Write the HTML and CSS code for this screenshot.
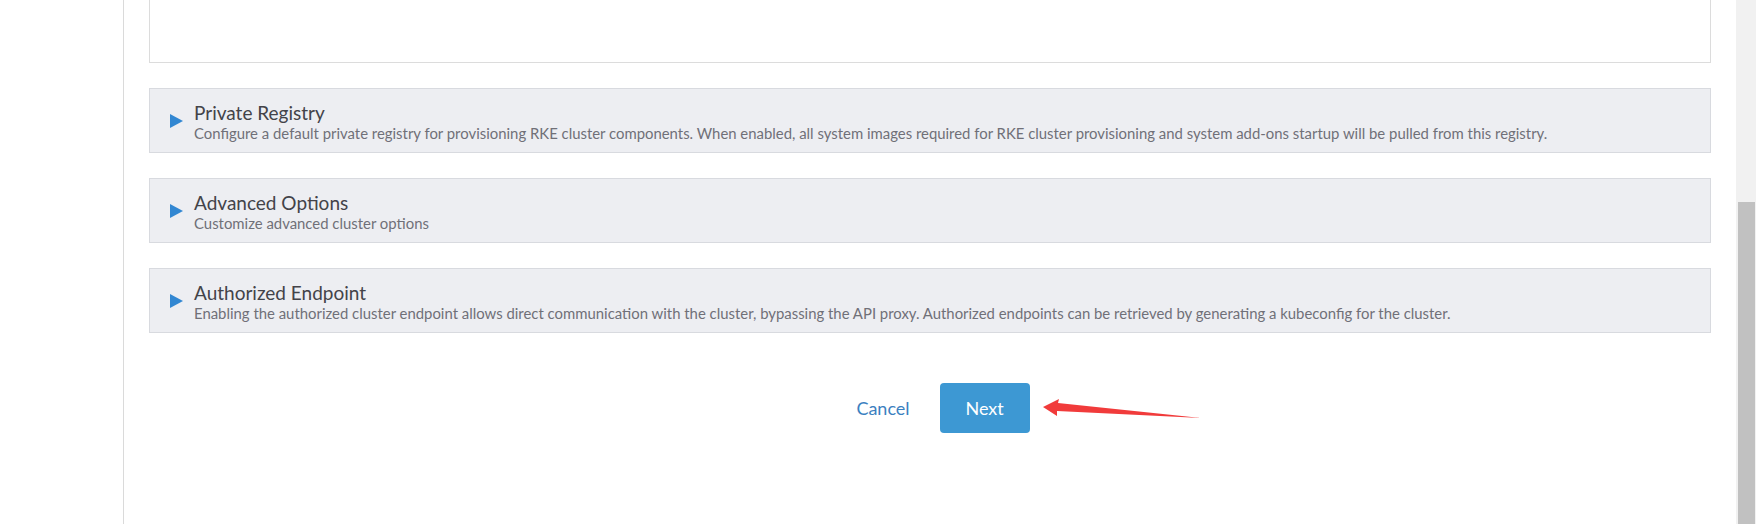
FILE: index.html
```html
<!DOCTYPE html>
<html lang="en">
<head>
<meta charset="UTF-8">
<meta name="viewport" content="width=device-width, initial-scale=1.0">
<title>Add Cluster</title>
<link rel="stylesheet" href="styles.css">
</head>
<body>

<div class="page">
  <aside class="sidebar"></aside>

  <main class="content">
    <!-- bottom of the config box, scrolled out of view -->
    <div class="config-box"></div>

    <div class="accordion-item">
      <span class="toggle"></span>
      <div class="accordion-text">
        <div class="accordion-title">Private Registry</div>
        <div class="accordion-desc">Configure a default private registry for provisioning RKE cluster components. When enabled, all system images required for RKE cluster provisioning and system add-ons startup will be pulled from this registry.</div>
      </div>
    </div>

    <div class="accordion-item">
      <span class="toggle"></span>
      <div class="accordion-text">
        <div class="accordion-title">Advanced Options</div>
        <div class="accordion-desc">Customize advanced cluster options</div>
      </div>
    </div>

    <div class="accordion-item">
      <span class="toggle"></span>
      <div class="accordion-text">
        <div class="accordion-title">Authorized Endpoint</div>
        <div class="accordion-desc">Enabling the authorized cluster endpoint allows direct communication with the cluster, bypassing the API proxy. Authorized endpoints can be retrieved by generating a kubeconfig for the cluster.</div>
      </div>
    </div>

    <div class="footer-buttons">
      <button type="button" class="btn-link">Cancel</button>
      <button type="button" class="btn-primary">Next</button>
    </div>
  </main>

  <div class="scrollbar">
    <div class="scrollbar-thumb"></div>
  </div>
</div>

<!-- red annotation arrow -->
<svg class="annotation-arrow" width="166" height="26" viewBox="0 0 166 26">
  <path d="M3 11 L19 3 L18 7 L161 22 L17 15 L17 20 Z" fill="#f13b3b"/>
</svg>

</body>
</html>
```

FILE: styles.css
```css
body {
  margin: 0;
  font-family: Lato, "Open Sans", Arial, sans-serif;
  background: #fff;
  height: 524px;
  overflow: hidden;
  position: relative;
}
.page {
  display: flex;
  height: 524px;
}
.sidebar {
  width: 123px;
  flex-shrink: 0;
  border-right: 1px solid #dadada;
}
.content {
  flex: 1;
  padding: 0 25px;
}
.config-box {
  height: 62px;
  border: 1px solid #dcdcdc;
  border-top: none;
  margin-bottom: 25px;
}
.accordion-item {
  display: flex;
  align-items: center;
  background: #edeef2;
  border: 1px solid #d8dadf;
  padding: 13px 20px 10px;
  margin-bottom: 25px;
}
.toggle {
  width: 0;
  height: 0;
  border-left: 13px solid #3287d2;
  border-top: 7px solid transparent;
  border-bottom: 7px solid transparent;
  margin-right: 11px;
  margin-top: -2px;
}
.accordion-title {
  font-size: 19px;
  line-height: 22px;
  color: #434349;
}
.accordion-desc {
  font-size: 14.9px;
  line-height: 18px;
  color: #707078;
}
.footer-buttons {
  display: flex;
  justify-content: center;
  gap: 12px;
  margin-top: 50px;
  padding-left: 8px;
}
.btn-link,
.btn-primary {
  font-family: Lato, "Open Sans", Arial, sans-serif;
  font-size: 18px;
  height: 50px;
  border: none;
  border-radius: 4px;
  cursor: pointer;
}
.btn-link {
  background: none;
  color: #3b80c0;
  padding: 0 18px;
}
.btn-primary {
  width: 90px;
  background: #3d98d3;
  color: #fff;
}
.scrollbar {
  width: 20px;
  flex-shrink: 0;
  background: #f1f1f1;
  padding: 202px 1px 0 2px;
  box-sizing: border-box;
}
.scrollbar-thumb {
  height: 100%;
  background: #c1c1c1;
}
.annotation-arrow {
  position: absolute;
  left: 1040px;
  top: 396px;
}
```
